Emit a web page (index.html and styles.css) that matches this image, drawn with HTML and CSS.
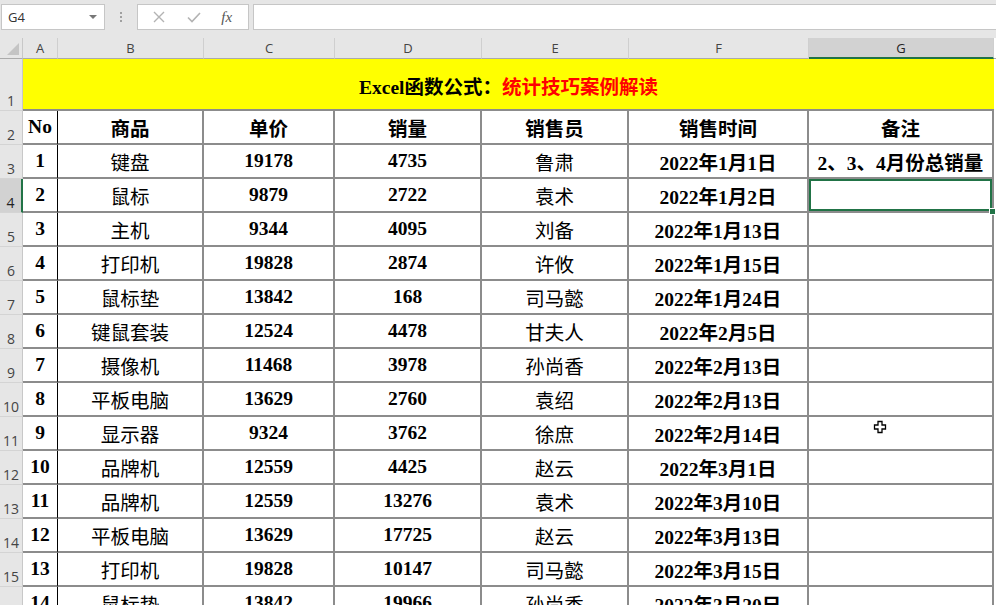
FILE: index.html
```html
<!DOCTYPE html>
<html lang="zh-CN">
<head>
    <meta charset="UTF-8">
    <title>Excel函数公式</title>
    <link rel="stylesheet" href="styles.css">
</head>
<body>
    <div class="topbar">
        <div class="namebox"><span>G4</span><span class="caret"></span></div>
        <div class="grip"><i></i><i></i><i></i></div>
        <div class="fbtns">
            <svg width="14" height="14" viewBox="0 0 14 14"><path d="M2 2 L12 12 M12 2 L2 12" stroke="#b3b3b3" stroke-width="1.4" fill="none"/></svg>
            <svg width="16" height="14" viewBox="0 0 16 14"><path d="M2 7.5 L6 11.5 L14 3" stroke="#b3b3b3" stroke-width="1.6" fill="none"/></svg>
            <span class="fx">fx</span>
        </div>
        <div class="finput"></div>
    </div>

    <div class="sheet">
        <div class="corner"></div>
        <div class="col">A</div>
        <div class="col">B</div>
        <div class="col">C</div>
        <div class="col">D</div>
        <div class="col">E</div>
        <div class="col">F</div>
        <div class="col sel">G</div>
        <div class="col blank"></div>

        <div class="rh">1</div>
        <div class="title">Excel函数公式：<span class="red">统计技巧案例解读</span></div>
        <div class="blank"></div>

        <div class="rh">2</div>
        <div class="c a">No</div><div class="c">商品</div><div class="c">单价</div><div class="c">销量</div><div class="c">销售员</div><div class="c">销售时间</div><div class="c">备注</div><div class="blank"></div>

        <div class="rh">3</div>
        <div class="c a">1</div><div class="c n">键盘</div><div class="c">19178</div><div class="c">4735</div><div class="c n">鲁肃</div><div class="c">2022年1月1日</div><div class="c">2、3、4月份总销量</div><div class="blank"></div>

        <div class="rh sel">4</div>
        <div class="c a">2</div><div class="c n">鼠标</div><div class="c">9879</div><div class="c">2722</div><div class="c n">袁术</div><div class="c">2022年1月2日</div><div class="c active"><span class="handle"></span></div><div class="blank"></div>

        <div class="rh">5</div>
        <div class="c a">3</div><div class="c n">主机</div><div class="c">9344</div><div class="c">4095</div><div class="c n">刘备</div><div class="c">2022年1月13日</div><div class="c"></div><div class="blank"></div>

        <div class="rh">6</div>
        <div class="c a">4</div><div class="c n">打印机</div><div class="c">19828</div><div class="c">2874</div><div class="c n">许攸</div><div class="c">2022年1月15日</div><div class="c"></div><div class="blank"></div>

        <div class="rh">7</div>
        <div class="c a">5</div><div class="c n">鼠标垫</div><div class="c">13842</div><div class="c">168</div><div class="c n">司马懿</div><div class="c">2022年1月24日</div><div class="c"></div><div class="blank"></div>

        <div class="rh">8</div>
        <div class="c a">6</div><div class="c n">键鼠套装</div><div class="c">12524</div><div class="c">4478</div><div class="c n">甘夫人</div><div class="c">2022年2月5日</div><div class="c"></div><div class="blank"></div>

        <div class="rh">9</div>
        <div class="c a">7</div><div class="c n">摄像机</div><div class="c">11468</div><div class="c">3978</div><div class="c n">孙尚香</div><div class="c">2022年2月13日</div><div class="c"></div><div class="blank"></div>

        <div class="rh">10</div>
        <div class="c a">8</div><div class="c n">平板电脑</div><div class="c">13629</div><div class="c">2760</div><div class="c n">袁绍</div><div class="c">2022年2月13日</div><div class="c"></div><div class="blank"></div>

        <div class="rh">11</div>
        <div class="c a">9</div><div class="c n">显示器</div><div class="c">9324</div><div class="c">3762</div><div class="c n">徐庶</div><div class="c">2022年2月14日</div><div class="c"></div><div class="blank"></div>

        <div class="rh">12</div>
        <div class="c a">10</div><div class="c n">品牌机</div><div class="c">12559</div><div class="c">4425</div><div class="c n">赵云</div><div class="c">2022年3月1日</div><div class="c"></div><div class="blank"></div>

        <div class="rh">13</div>
        <div class="c a">11</div><div class="c n">品牌机</div><div class="c">12559</div><div class="c">13276</div><div class="c n">袁术</div><div class="c">2022年3月10日</div><div class="c"></div><div class="blank"></div>

        <div class="rh">14</div>
        <div class="c a">12</div><div class="c n">平板电脑</div><div class="c">13629</div><div class="c">17725</div><div class="c n">赵云</div><div class="c">2022年3月13日</div><div class="c"></div><div class="blank"></div>

        <div class="rh">15</div>
        <div class="c a">13</div><div class="c n">打印机</div><div class="c">19828</div><div class="c">10147</div><div class="c n">司马懿</div><div class="c">2022年3月15日</div><div class="c"></div><div class="blank"></div>

        <div class="rh">16</div>
        <div class="c a">14</div><div class="c n">鼠标垫</div><div class="c">13842</div><div class="c">19966</div><div class="c n">孙尚香</div><div class="c">2022年3月20日</div><div class="c"></div><div class="blank"></div>
    </div>

    <!-- mouse pointer -->
    <svg class="pointer" width="15" height="15" viewBox="0 0 15 15">
        <path d="M5 1.5 H9 V5 H12.5 V9 H9 V12.5 H5 V9 H1.5 V5 H5 Z" fill="#fff" stroke="#000" stroke-width="1.3"/>
    </svg>
</body>
</html>
```

FILE: styles.css
```css
body {
    margin: 0;
    height: 605px;
    overflow: hidden;
    background-color: #fff;
    font-family: 'Open Sans', 'Noto Sans', sans-serif;
    position: relative;
}
.topbar {
    display: flex;
    align-items: flex-start;
    height: 38px;
    padding-top: 4px;
    box-sizing: border-box;
    background-color: #e6e6e6;
}
.namebox {
    display: flex;
    align-items: center;
    justify-content: space-between;
    width: 104px;
    height: 26px;
    margin-left: 1px;
    padding: 0 6px;
    box-sizing: border-box;
    background-color: #fff;
    border: 1px solid #c6c6c6;
    font-size: 13px;
    color: #333;
}
.caret {
    width: 0;
    height: 0;
    border-left: 4px solid transparent;
    border-right: 4px solid transparent;
    border-top: 4px solid #777;
    margin-right: 1px;
}
.grip {
    width: 32px;
    height: 26px;
    display: flex;
    flex-direction: column;
    align-items: center;
    justify-content: center;
    gap: 2px;
}
.grip i {
    width: 2px;
    height: 2px;
    background-color: #a0a0a0;
}
.fbtns {
    display: flex;
    align-items: center;
    justify-content: space-around;
    width: 112px;
    height: 26px;
    padding: 0 6px 0 4px;
    box-sizing: border-box;
    background-color: #fff;
    border: 1px solid #c6c6c6;
}
.fx {
    font-family: 'Liberation Serif', serif;
    font-style: italic;
    font-size: 15px;
    color: #555;
}
.finput {
    flex: 1;
    height: 26px;
    margin-left: 4px;
    box-sizing: border-box;
    background-color: #fff;
    border: 1px solid #c6c6c6;
    border-right: none;
}

.sheet {
    display: grid;
    grid-template-columns: 23px 35px 146px 131px 147px 147px 180px 185px 2px;
    grid-template-rows: 21px 52px;
    grid-auto-rows: 34px;
    font-family: 'Liberation Serif', 'Noto Sans CJK SC', serif;
    font-weight: bold;
    font-size: 19.5px;
    color: #000;
}
.sheet > div {
    box-sizing: border-box;
}
.corner {
    background-color: #e6e6e6;
    border-right: 1px solid #c8c8c8;
    border-bottom: 1px solid #ababab;
    position: relative;
}
.corner::after {
    content: '';
    position: absolute;
    right: 3px;
    bottom: 3px;
    border-left: 12px solid transparent;
    border-bottom: 12px solid #c4c4c4;
}
.col {
    display: flex;
    align-items: center;
    justify-content: center;
    background-color: #e6e6e6;
    border-right: 1px solid #cfcfcf;
    border-bottom: 1px solid #ababab;
    font-family: 'Open Sans', 'Noto Sans', sans-serif;
    font-weight: normal;
    font-size: 13px;
    color: #444;
}
.col.sel {
    background-color: #d2d2d2;
    border-bottom: 2px solid #217346;
    color: #222;
}
.col.blank {
    border-right: none;
}
.rh {
    display: flex;
    align-items: flex-end;
    justify-content: center;
    padding-bottom: 0;
    background-color: #e6e6e6;
    border-right: 1px solid #c8c8c8;
    border-bottom: 1px solid #d4d4d4;
    font-family: 'Open Sans', 'Noto Sans', sans-serif;
    font-weight: normal;
    font-size: 14px;
    color: #444;
}
.rh.sel {
    background-color: #d2d2d2;
    border-right: 2px solid #217346;
    color: #222;
}
.title {
    grid-column: span 7;
    display: flex;
    align-items: center;
    justify-content: center;
    padding-top: 2px;
    background-color: #ffff00;
    border-bottom: 2px solid #8c8c8c;
}
.title .red {
    color: #ff0000;
}
.c {
    display: flex;
    align-items: center;
    justify-content: center;
    white-space: nowrap;
    border-right: 2px solid #8c8c8c;
    border-bottom: 2px solid #8c8c8c;
}
.c.a {
    border-right: 1px solid #000;
}
.c.n {
    font-weight: normal;
}
.c.active {
    position: relative;
    box-shadow: inset 0 0 0 2px #217346;
}
.handle {
    position: absolute;
    right: -4px;
    bottom: -4px;
    width: 5px;
    height: 5px;
    background-color: #217346;
    border: 1px solid #fff;
}
.blank {
    background-color: #fff;
}
.pointer {
    position: absolute;
    left: 873px;
    top: 420px;
}
```
